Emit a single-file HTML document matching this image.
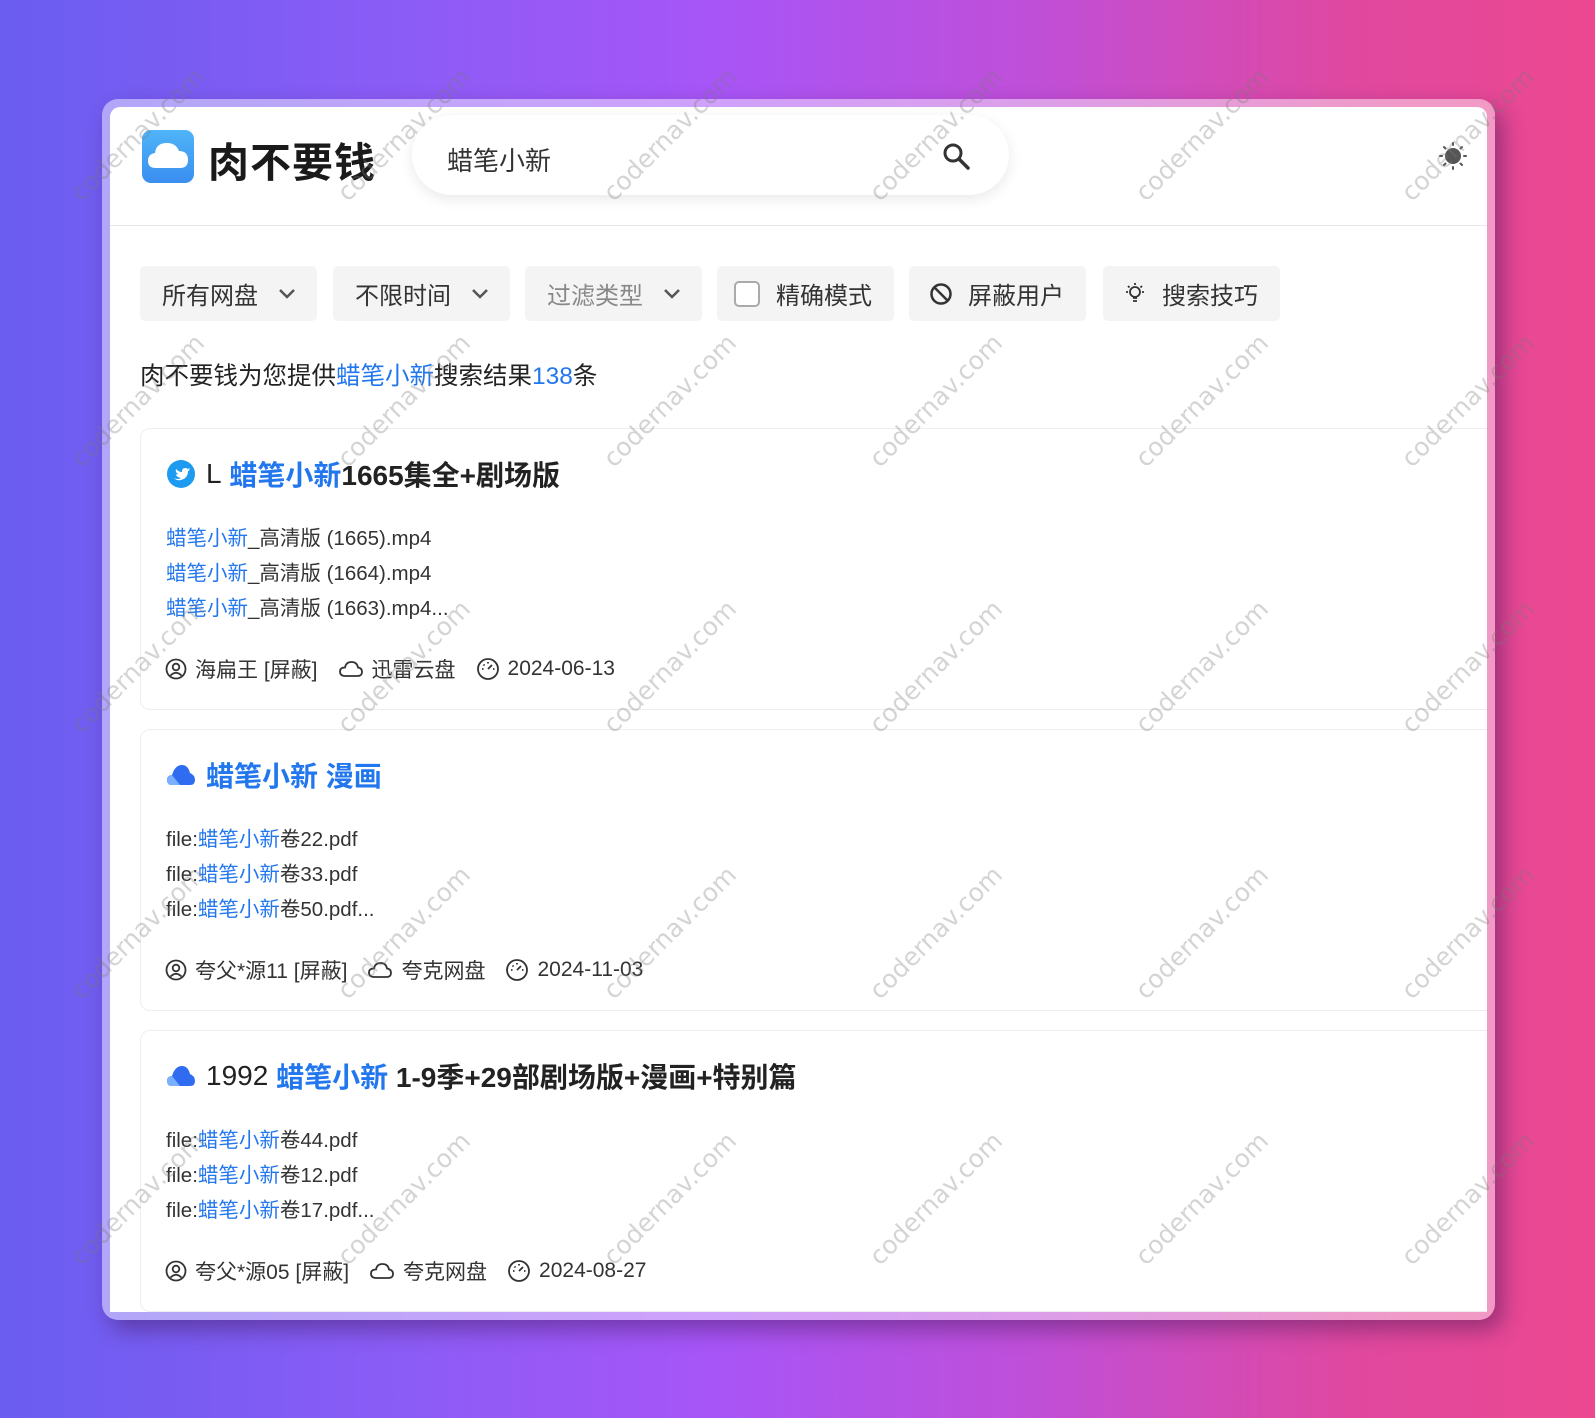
<!DOCTYPE html>
<html><head><meta charset="utf-8"><style>
*{margin:0;padding:0;box-sizing:border-box}
body{width:1595px;height:1418px;overflow:hidden;position:relative;font-family:"Liberation Sans","Noto Sans CJK SC",sans-serif;background:linear-gradient(90deg,#6a5df0 0%,#8b5cf6 25%,#a855f7 45%,#c04fd8 65%,#e0489f 85%,#ec4890 100%);}
.win{position:absolute;left:102px;top:99px;width:1393px;height:1221px;border-radius:16px;background:rgba(255,255,255,0.45);box-shadow:8px 10px 22px rgba(60,20,80,0.45);}
.inner{position:absolute;left:110px;top:107px;width:1377px;height:1205px;background:#fff;border-radius:10px 10px 0 0;overflow:hidden;}
.abs{position:absolute}
.hline{left:0;top:118px;width:100%;height:1px;background:#e8e8e8}
.logo{left:32px;top:23px;width:52px;height:53px;border-radius:9px;background:linear-gradient(180deg,#4fb4f8,#3a8ef0)}
.title{left:98px;top:22px;font-size:41px;font-weight:bold;color:#1a1a1a;letter-spacing:1px}
.search{left:302px;top:8px;width:597px;height:80px;border-radius:40px;background:#fff;box-shadow:0 4px 14px rgba(0,0,0,0.09)}
.search span{position:absolute;left:35px;top:26px;font-size:26px;color:#333}
.btn{top:159px;height:55px;width:177px;background:#f4f4f4;border-radius:5px;font-size:24px;color:#333;display:flex;align-items:center}
.sum{left:30px;top:250px;font-size:24.5px;color:#222}
.b{color:#2277ee}
.card{left:30px;width:1400px;height:282px;border:1px solid #eee;border-radius:10px;}
.ct{position:absolute;left:25px;top:25px;font-size:28px;font-weight:bold;color:#222;display:flex;align-items:center;white-space:nowrap}
.fl{position:absolute;left:25px;font-size:20.5px;color:#333;white-space:nowrap}
.meta{position:absolute;left:24px;top:225px;font-size:21px;color:#333;display:flex;align-items:center;white-space:nowrap}
.meta svg{margin-right:8px}
.wm{position:absolute;font-size:25px;color:rgba(120,120,120,0.32);transform:rotate(-45deg);white-space:nowrap;font-family:"DejaVu Sans",sans-serif;z-index:10;pointer-events:none}
</style></head><body>
<div class="win"></div>
<div class="inner">
 <div class="abs hline"></div>
 <div class="abs logo"><svg width="52" height="53" viewBox="0 0 52 53"><path d="M14 38 Q6 38 6 31 Q6 24 13 23 Q14 13 25 13 Q34 13 37 21 Q46 21 46 30 Q46 38 38 38 Z" fill="#fff"/></svg></div>
 <div class="abs title">肉不要钱</div>
 <div class="abs search"><span>蜡笔小新</span>
  <svg style="position:absolute;left:530px;top:27px" width="30" height="30" viewBox="0 0 30 30"><circle cx="11" cy="11" r="8" fill="none" stroke="#333" stroke-width="3"/><path d="M17 17 L26 26" stroke="#333" stroke-width="3.5" stroke-linecap="round"/></svg></div>
 <svg class="abs" style="left:1328px;top:34px" width="30" height="30" viewBox="0 0 30 30"><circle cx="15" cy="15" r="8" fill="#555"/><g stroke="#555" stroke-width="2" stroke-linecap="round"><path d="M15 2v2M15 26v2M2 15h2M26 15h2M6 6l1.5 1.5M22.5 22.5l1.5 1.5M6 24l1.5-1.5M22.5 7.5L24 6"/></g></svg>

 <div class="abs btn" style="left:30px"><span style="margin-left:22px">所有网盘</span><svg style="margin-left:20px" width="18" height="12" viewBox="0 0 18 12"><path d="M2 2l7 7 7-7" fill="none" stroke="#555" stroke-width="2.5"/></svg></div>
 <div class="abs btn" style="left:223px"><span style="margin-left:22px">不限时间</span><svg style="margin-left:20px" width="18" height="12" viewBox="0 0 18 12"><path d="M2 2l7 7 7-7" fill="none" stroke="#555" stroke-width="2.5"/></svg></div>
 <div class="abs btn" style="left:415px;color:#888"><span style="margin-left:22px">过滤类型</span><svg style="margin-left:20px" width="18" height="12" viewBox="0 0 18 12"><path d="M2 2l7 7 7-7" fill="none" stroke="#555" stroke-width="2.5"/></svg></div>
 <div class="abs btn" style="left:607px"><span style="margin-left:17px;width:26px;height:26px;border:2px solid #aaa;border-radius:5px;background:#fff;display:inline-block"></span><span style="margin-left:16px">精确模式</span></div>
 <div class="abs btn" style="left:799px"><svg style="margin-left:20px" width="24" height="24" viewBox="0 0 24 24"><circle cx="12" cy="12" r="9.5" fill="none" stroke="#333" stroke-width="2.5"/><path d="M5.5 5.5l13 13" stroke="#333" stroke-width="2.5"/></svg><span style="margin-left:15px">屏蔽用户</span></div>
 <div class="abs btn" style="left:993px"><svg style="margin-left:20px" width="24" height="24" viewBox="0 0 24 24"><circle cx="12" cy="10" r="5" fill="none" stroke="#333" stroke-width="1.8"/><path d="M10 16h4M10 19h4M12 1v2M3 10h2M19 10h2M5 4l1.5 1.5M19 4l-1.5 1.5" stroke="#333" stroke-width="1.8"/></svg><span style="margin-left:15px">搜索技巧</span></div>

 <div class="abs sum">肉不要钱为您提供<span class="b">蜡笔小新</span>搜索结果<span class="b">138</span>条</div>

 <div class="abs card" style="top:321px">
  <div class="ct"><svg width="30" height="30" viewBox="0 0 30 30" style="margin-right:10px"><circle cx="15" cy="15" r="14" fill="#1d9bf0"/><path d="M8 19 Q12 21 15 19 Q10 18 10 15 Q12 16 12 15 Q9 13 10 10 Q13 13 16 13 Q16 9 19 9 Q21 9 22 10 L24 9 L23 11 L24 11 L22 12 Q22 19 15 21 Q11 22 8 19Z" fill="#fff"/></svg><span style="font-weight:normal">L&nbsp;</span><span class="b">蜡笔小新</span>1665集全+剧场版</div>
  <div class="fl" style="top:92px"><span class="b">蜡笔小新</span>_高清版 (1665).mp4</div>
  <div class="fl" style="top:127px"><span class="b">蜡笔小新</span>_高清版 (1664).mp4</div>
  <div class="fl" style="top:162px"><span class="b">蜡笔小新</span>_高清版 (1663).mp4...</div>
  <div class="meta"><svg width="22" height="22" viewBox="0 0 22 22"><circle cx="11" cy="11" r="9.5" fill="none" stroke="#333" stroke-width="1.8"/><circle cx="11" cy="9" r="3.3" fill="none" stroke="#333" stroke-width="1.8"/><path d="M5.5 17.5Q11 12 16.5 17.5" fill="none" stroke="#333" stroke-width="1.8"/></svg>海扁王 [屏蔽]<svg style="margin-left:20px" width="26" height="20" viewBox="0 0 26 20"><path d="M7 17Q2 17 2 12.5Q2 8.5 7 8.5Q8 3 13.5 3Q19 3 20 8.5Q24 9 24 13Q24 17 19.5 17Z" fill="none" stroke="#333" stroke-width="1.8"/></svg>迅雷云盘<svg style="margin-left:20px" width="24" height="24" viewBox="0 0 24 24"><circle cx="12" cy="12" r="10" fill="none" stroke="#333" stroke-width="1.8"/><path d="M12 12l4-4M6 12h1.5M12 5v1.5M17 12h1.5M7.5 7.5l1 1" stroke="#333" stroke-width="1.8"/></svg>2024-06-13</div>
 </div>

 <div class="abs card" style="top:622px">
  <div class="ct"><svg width="30" height="24" viewBox="0 0 30 24" style="margin-right:10px"><path d="M6 22Q1 22 1 17Q1 12 6 12Q9 2 16 2Q22 2 24 10Q29 12 29 17Q29 22 24 22Z" fill="#2f6cf0"/><path d="M6 22Q1 22 1 17Q1 12 6 12L14 22Z" fill="#7ab0ff"/></svg><span class="b">蜡笔小新 漫画</span></div>
  <div class="fl" style="top:92px">file:<span class="b">蜡笔小新</span>卷22.pdf</div>
  <div class="fl" style="top:127px">file:<span class="b">蜡笔小新</span>卷33.pdf</div>
  <div class="fl" style="top:162px">file:<span class="b">蜡笔小新</span>卷50.pdf...</div>
  <div class="meta"><svg width="22" height="22" viewBox="0 0 22 22"><circle cx="11" cy="11" r="9.5" fill="none" stroke="#333" stroke-width="1.8"/><circle cx="11" cy="9" r="3.3" fill="none" stroke="#333" stroke-width="1.8"/><path d="M5.5 17.5Q11 12 16.5 17.5" fill="none" stroke="#333" stroke-width="1.8"/></svg>夸父*源11 [屏蔽]<svg style="margin-left:20px" width="26" height="20" viewBox="0 0 26 20"><path d="M7 17Q2 17 2 12.5Q2 8.5 7 8.5Q8 3 13.5 3Q19 3 20 8.5Q24 9 24 13Q24 17 19.5 17Z" fill="none" stroke="#333" stroke-width="1.8"/></svg>夸克网盘<svg style="margin-left:20px" width="24" height="24" viewBox="0 0 24 24"><circle cx="12" cy="12" r="10" fill="none" stroke="#333" stroke-width="1.8"/><path d="M12 12l4-4M6 12h1.5M12 5v1.5M17 12h1.5M7.5 7.5l1 1" stroke="#333" stroke-width="1.8"/></svg>2024-11-03</div>
 </div>

 <div class="abs card" style="top:923px">
  <div class="ct"><svg width="30" height="24" viewBox="0 0 30 24" style="margin-right:10px"><path d="M6 22Q1 22 1 17Q1 12 6 12Q9 2 16 2Q22 2 24 10Q29 12 29 17Q29 22 24 22Z" fill="#2f6cf0"/><path d="M6 22Q1 22 1 17Q1 12 6 12L14 22Z" fill="#7ab0ff"/></svg><span style="font-weight:normal">1992&nbsp;</span><span class="b">蜡笔小新</span>&nbsp;1-9季+29部剧场版+漫画+特别篇</div>
  <div class="fl" style="top:92px">file:<span class="b">蜡笔小新</span>卷44.pdf</div>
  <div class="fl" style="top:127px">file:<span class="b">蜡笔小新</span>卷12.pdf</div>
  <div class="fl" style="top:162px">file:<span class="b">蜡笔小新</span>卷17.pdf...</div>
  <div class="meta"><svg width="22" height="22" viewBox="0 0 22 22"><circle cx="11" cy="11" r="9.5" fill="none" stroke="#333" stroke-width="1.8"/><circle cx="11" cy="9" r="3.3" fill="none" stroke="#333" stroke-width="1.8"/><path d="M5.5 17.5Q11 12 16.5 17.5" fill="none" stroke="#333" stroke-width="1.8"/></svg>夸父*源05 [屏蔽]<svg style="margin-left:20px" width="26" height="20" viewBox="0 0 26 20"><path d="M7 17Q2 17 2 12.5Q2 8.5 7 8.5Q8 3 13.5 3Q19 3 20 8.5Q24 9 24 13Q24 17 19.5 17Z" fill="none" stroke="#333" stroke-width="1.8"/></svg>夸克网盘<svg style="margin-left:20px" width="24" height="24" viewBox="0 0 24 24"><circle cx="12" cy="12" r="10" fill="none" stroke="#333" stroke-width="1.8"/><path d="M12 12l4-4M6 12h1.5M12 5v1.5M17 12h1.5M7.5 7.5l1 1" stroke="#333" stroke-width="1.8"/></svg>2024-08-27</div>
 </div>
</div>

<div class="wm" style="left:50px;top:120px">codernav.com</div>
<div class="wm" style="left:316px;top:120px">codernav.com</div>
<div class="wm" style="left:582px;top:120px">codernav.com</div>
<div class="wm" style="left:848px;top:120px">codernav.com</div>
<div class="wm" style="left:1114px;top:120px">codernav.com</div>
<div class="wm" style="left:1380px;top:120px">codernav.com</div>
<div class="wm" style="left:50px;top:386px">codernav.com</div>
<div class="wm" style="left:316px;top:386px">codernav.com</div>
<div class="wm" style="left:582px;top:386px">codernav.com</div>
<div class="wm" style="left:848px;top:386px">codernav.com</div>
<div class="wm" style="left:1114px;top:386px">codernav.com</div>
<div class="wm" style="left:1380px;top:386px">codernav.com</div>
<div class="wm" style="left:50px;top:652px">codernav.com</div>
<div class="wm" style="left:316px;top:652px">codernav.com</div>
<div class="wm" style="left:582px;top:652px">codernav.com</div>
<div class="wm" style="left:848px;top:652px">codernav.com</div>
<div class="wm" style="left:1114px;top:652px">codernav.com</div>
<div class="wm" style="left:1380px;top:652px">codernav.com</div>
<div class="wm" style="left:50px;top:918px">codernav.com</div>
<div class="wm" style="left:316px;top:918px">codernav.com</div>
<div class="wm" style="left:582px;top:918px">codernav.com</div>
<div class="wm" style="left:848px;top:918px">codernav.com</div>
<div class="wm" style="left:1114px;top:918px">codernav.com</div>
<div class="wm" style="left:1380px;top:918px">codernav.com</div>
<div class="wm" style="left:50px;top:1184px">codernav.com</div>
<div class="wm" style="left:316px;top:1184px">codernav.com</div>
<div class="wm" style="left:582px;top:1184px">codernav.com</div>
<div class="wm" style="left:848px;top:1184px">codernav.com</div>
<div class="wm" style="left:1114px;top:1184px">codernav.com</div>
<div class="wm" style="left:1380px;top:1184px">codernav.com</div>
</body></html>
